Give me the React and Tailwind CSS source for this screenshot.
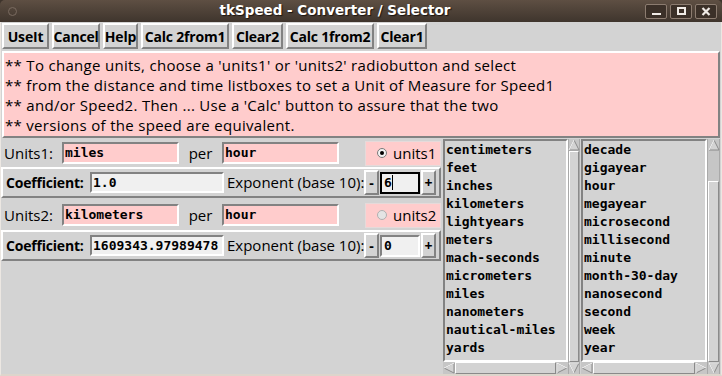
import React from 'react'

const raised = 'border-2 border-t-white border-l-white border-r-[#828282] border-b-[#828282]'
const sunken = 'border-2 border-t-[#828282] border-l-[#828282] border-r-white border-b-white'
const comic = "font-['Open_Sans',sans-serif] text-black"
const mono = "font-['DejaVu_Sans_Mono',monospace] font-bold text-[13px] text-black"

const buttons = [
  ['UseIt', 'w-[47px]'],
  ['Cancel', 'w-[48px]'],
  ['Help', 'w-[35px]'],
  ['Calc 2from1', 'w-[88px]'],
  ['Clear2', 'w-[51px]'],
  ['Calc 1from2', 'w-[88px]'],
  ['Clear1', 'w-[50px]'],
]

const distances = ['centimeters', 'feet', 'inches', 'kilometers', 'lightyears', 'meters', 'mach-seconds', 'micrometers', 'miles', 'nanometers', 'nautical-miles', 'yards']
const times = ['decade', 'gigayear', 'hour', 'megayear', 'microsecond', 'millisecond', 'minute', 'month-30-day', 'nanosecond', 'second', 'week', 'year']

function Arrow({ dir }) {
  const shape = {
    up: { pts: '6,1 11,11 1,11', lit: '1,11 6,1' },
    down: { pts: '1,1 11,1 6,11', lit: '6,11 1,1 11,1' },
    left: { pts: '1,6 11,1 11,11', lit: '1,6 11,1' },
    right: { pts: '1,1 11,6 1,11', lit: '1,11 1,1 11,6' },
  }[dir]
  return (
    <svg width="12" height="12" viewBox="0 0 12 12" className="shrink-0">
      <polygon points={shape.pts} fill="#d3d3d3" stroke="#8a8a8a" strokeWidth="1" />
      <polyline points={shape.lit} fill="none" stroke="#ffffff" strokeWidth="1" />
    </svg>
  )
}

function VScroll({ width, gapTop }) {
  return (
    <div className={`${width} flex flex-col items-center bg-[#c6c6c6] border-x border-[#a9a9a9]`}>
      <Arrow dir="up" />
      <div className="flex-1 w-full flex flex-col">
        {gapTop && <div className="h-[30px]" />}
        <div className="flex-1 bg-[#d3d3d3] border border-t-white border-l-white border-r-[#8a8a8a] border-b-[#8a8a8a]" />
      </div>
      <Arrow dir="down" />
    </div>
  )
}

function HScroll() {
  return (
    <div className="h-[12px] flex items-center bg-[#c6c6c6]">
      <Arrow dir="left" />
      <div className="flex-1 h-full bg-[#d3d3d3] border border-t-white border-l-white border-r-[#8a8a8a] border-b-[#8a8a8a]" />
      <Arrow dir="right" />
    </div>
  )
}

function ListGroup({ items, listW, scrollW, gapTop }) {
  return (
    <div className="flex h-full">
      <div className={`${listW} flex flex-col`}>
        <div className={`h-[223px] ${sunken} bg-[#d3d3d3] pl-[1px] overflow-hidden`}>
          {items.map(it => (
            <div key={it} className={`${mono} leading-[18px] h-[18px]`}>{it}</div>
          ))}
        </div>
        <HScroll />
      </div>
      <VScroll width={scrollW} gapTop={gapTop} />
    </div>
  )
}

function Radio({ label, on }) {
  return (
    <div className="w-[76px] h-[25px] bg-[#ffcccc] border border-[#e6dada] flex items-center pl-[11px]">
      <span className={`w-[10px] h-[10px] rounded-full border flex items-center justify-center ${on ? 'bg-[#f2f2f2] border-[#7a7a7a]' : 'bg-[#e4e4e4] border-[#b0b0b0]'}`}>
        {on && <span className="w-[4px] h-[4px] rounded-full bg-black" />}
      </span>
      <span className={`${comic} text-[15px] ml-[6px] leading-none`}>{label}</span>
    </div>
  )
}

function UnitsRow({ label, dist, radio, on, cls }) {
  return (
    <div className={`flex items-center ${cls}`}>
      <div className={`${comic} text-[15px] w-[61px] pl-[3px]`}>{label}</div>
      <div className={`w-[117px] h-[22px] ${sunken} bg-[#ffcccc] pl-[1px] flex items-center ${mono}`}>{dist}</div>
      <div className={`${comic} text-[15px] w-[43px] text-center`}>per</div>
      <div className={`w-[117px] h-[22px] ${sunken} bg-[#ffcccc] pl-[1px] flex items-center ${mono}`}>hour</div>
      <div className="ml-[26px]"><Radio label={radio} on={on} /></div>
    </div>
  )
}

function CoefRow({ coef, exp, focused }) {
  return (
    <div className={`h-[31px] ${raised} flex items-center`}>
      <div className={`${comic} font-bold text-[14px] w-[87px] pl-[3px] whitespace-nowrap tracking-[-0.2px]`}>Coefficient:</div>
      <div className={`w-[134px] h-[21px] ${sunken} bg-[#f0f0f0] pl-[1px] flex items-center ${mono}`}>{coef}</div>
      <div className={`${comic} text-[15px] w-[140px] pl-[3px] whitespace-nowrap`}>Exponent (base 10):</div>
      <div className={`w-[15px] h-[25px] ${raised} bg-[#d3d3d3] flex items-center justify-center ${comic} text-[14px] font-bold`}>-</div>
      {focused ? (
        <div className={`ml-[1px] w-[40px] h-[22px] border-2 border-black bg-[#f0f0f0] pl-[2px] flex items-center ${mono}`}>
          {exp}<span className="w-[1px] h-[15px] bg-black" />
        </div>
      ) : (
        <div className={`ml-[1px] w-[40px] h-[22px] ${sunken} bg-[#f0f0f0] pl-[2px] flex items-center ${mono}`}>{exp}</div>
      )}
      <div className={`ml-[1px] w-[15px] h-[25px] ${raised} bg-[#d3d3d3] flex items-center justify-center ${comic} text-[14px] font-bold`}>+</div>
    </div>
  )
}

export default function App() {
  return (
    <div className="w-[722px] h-[376px] flex flex-col overflow-hidden bg-[#3e342c]">
      {/* title bar */}
      <div className="h-[22px] flex items-center bg-linear-to-b from-[#5e4f43] to-[#3f352d] rounded-t-[5px]">
        <div className="w-[25px] flex justify-center">
          <span className="w-[9px] h-[9px] rounded-full border border-[#7a6b60]" />
        </div>
        <div className="flex-1 text-center text-white font-['DejaVu_Sans',sans-serif] font-bold text-[13.5px] leading-none [text-shadow:1px_1px_1px_#1a140f]">
          tkSpeed - Converter / Selector
        </div>
        <div className="w-[77px] flex gap-[3px] pr-[2px]">
          {['min', 'max', 'close'].map(k => (
            <div key={k} className="w-[22px] h-[15px] rounded-[2px] border border-[#8c7c70] bg-[#3b3028] flex items-center justify-center">
              {k === 'min' && <span className="w-[9px] h-[2px] bg-[#f0ebe6] mt-[5px]" />}
              {k === 'max' && <span className="w-[9px] h-[8px] border-2 border-[#f0ebe6]" />}
              {k === 'close' && (
                <svg width="10" height="9" viewBox="0 0 10 9"><path d="M1.5 1 L8.5 8 M8.5 1 L1.5 8" stroke="#f0ebe6" strokeWidth="2.2" /></svg>
              )}
            </div>
          ))}
        </div>
      </div>

      {/* body */}
      <div className="flex-1 flex flex-col bg-[#d3d3d3] border-l border-r border-[#ece7e2] border-b-2 border-b-[#ddd5cc]">
        <div className="mt-[1px] pl-[1px] h-[26px] flex gap-[3px]">
          {buttons.map(([t, w]) => (
            <div key={t} className={`${w} h-[26px] ${raised} bg-[#d3d3d3] flex items-center justify-center ${comic} font-bold text-[14px] tracking-[-0.2px] whitespace-nowrap`}>{t}</div>
          ))}
        </div>

        <div className={`mt-[2px] mx-[1px] h-[87px] ${raised} bg-[#ffcccc] pt-[2px] pl-[1px] ${comic} text-[15px] tracking-[0.3px] leading-[20px]`}>
          <div>** To change units, choose a 'units1' or 'units2' radiobutton and select</div>
          <div>** from the distance and time listboxes to set a Unit of Measure for Speed1</div>
          <div>** and/or Speed2. Then ... Use a 'Calc' button to assure that the two</div>
          <div>** versions of the speed are equivalent.</div>
        </div>

        <div className="mt-[1px] flex-1 flex">
          <div className="w-[440px] flex flex-col">
            <UnitsRow label="Units1:" dist="miles" radio="units1" on cls="h-[28px]" />
            <CoefRow coef="1.0" exp="6" focused />
            <UnitsRow label="Units2:" dist="kilometers" radio="units2" cls="h-[32px] pt-[2px]" />
            <CoefRow coef="1609343.97989478" exp="0" />
          </div>
          <div className="ml-[2px]">
            <ListGroup items={distances} listW="w-[125px]" scrollW="w-[12px]" />
          </div>
          <div className="ml-[1px]">
            <ListGroup items={times} listW="w-[126px]" scrollW="w-[13px]" gapTop />
          </div>
        </div>
      </div>
    </div>
  )
}
